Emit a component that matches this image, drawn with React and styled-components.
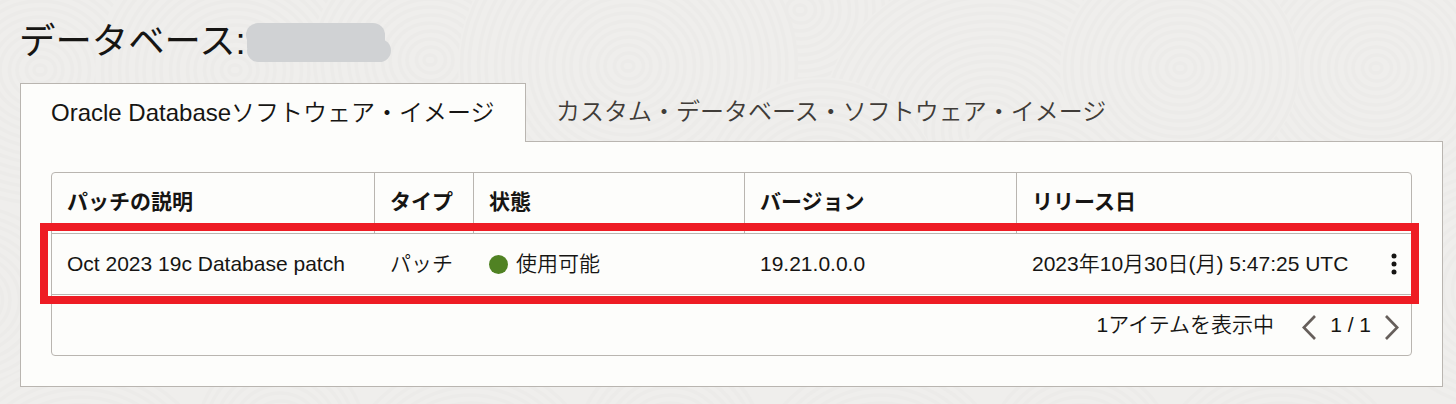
import React from "react";
import styled, { createGlobalStyle } from "styled-components";

const GlobalStyle = createGlobalStyle`
  *, *::before, *::after { box-sizing: border-box; }
  body {
    margin: 0;
    background: #efeeec;
    color: #161513;
    font-family: "Liberation Sans", "Noto Sans CJK JP", sans-serif;
    font-weight: 350;
  }
`;

const border = "#b9b5b0";

const Page = styled.main`
  position: relative;
  isolation: isolate;
  height: 404px;
  overflow: hidden;
  padding: 14px 13px 17px 20px;
`;

const Backdrop = styled.svg`
  position: absolute;
  inset: 0;
  z-index: -1;
`;

const TitleRow = styled.header`
  display: flex;
  height: 69px;
`;

const Title = styled.h1`
  margin: 0 0 0 -1px;
  font-size: 36.4px;
  font-weight: 400;
  line-height: 56px;
  white-space: nowrap;
`;

const Redaction = styled.svg`
  flex: none;
  margin-top: 9px;
`;

const Tabs = styled.nav`
  display: flex;
  height: 59px;
  position: relative;
  z-index: 1;
  margin-bottom: -1px;
`;

const Tab = styled.a`
  height: ${(p) => (p.$active ? 59 : 58)}px;
  padding: 0 30px;
  font-size: 24px;
  line-height: ${(p) => (p.$active ? 57 : 55)}px;
  white-space: nowrap;
  color: ${(p) => (p.$active ? "#161513" : "#403c38")};
  background: ${(p) => (p.$active ? "#fdfdfb" : "transparent")};
  border: solid ${(p) => (p.$active ? border : "transparent")};
  border-width: 1px 1px 0;
  ${(p) => (p.$active ? "width: 506px;" : "padding-left: 29px;")}
`;

const Panel = styled.section`
  height: 246px;
  padding: 30px;
  background: #fdfdfb;
  border: 1px solid ${border};
`;

const Table = styled.div`
  width: 1361px;
  height: 184px;
  border: 1px solid ${border};
  border-radius: 4px;
  font-size: 21px;
  line-height: 60px;
  white-space: nowrap;
`;

const Row = styled.div`
  position: relative;
  display: grid;
  grid-template-columns: 323px 99px 271px 272px 1fr;
  height: 61px;
  border-bottom: 1px solid ${border};
`;

const HeadCell = styled.div`
  padding-left: 15px;
  font-weight: 700;
  line-height: 58px;
  border-right: 1px solid ${border};
  &:last-child { border-right: 0; }
`;

const Cell = styled.div`
  display: flex;
  align-items: center;
  padding-left: 15px;
`;

const StatusDot = styled.span`
  width: 19px;
  height: 19px;
  margin: 1px 8px 0 0;
  border-radius: 50%;
  background: #508223;
`;

const MenuIcon = styled.svg`
  margin: 0 14px 0 auto;
`;

const Highlight = styled.div`
  position: absolute;
  top: -11px;
  left: -12px;
  width: 1379px;
  height: 81px;
  border: 8px solid #ee1c24;
  pointer-events: none;
  z-index: 1;
`;

const Pager = styled.footer`
  display: flex;
  align-items: center;
  justify-content: flex-end;
  height: 60px;
  padding-right: 12px;
`;

const PageNumber = styled.span`
  margin: 0 14px;
`;

const Arrow = styled.svg`
  margin-top: 4px;
  margin-left: ${(p) => p.$gap || 0}px;
`;

const centers = [
  [330, 10, 150], [800, 10, 140], [1100, 0, 150],
  [40, 70, 150], [235, 70, 140], [430, 60, 120],
  [628, 66, 170], [990, 130, 170], [820, 190, 120],
  [1376, 68, 140], [1180, 68, 120], [1040, 190, 90],
  [-30, 300, 110], [80, 490, 140], [280, 430, 90],
  [470, 480, 130], [670, 440, 100], [880, 480, 130],
  [1080, 450, 100], [1280, 480, 130], [1500, 290, 130],
];

function Rings() {
  return (
    <Backdrop width="1456" height="404" viewBox="0 0 1456 404" aria-hidden="true">
      {centers.map(([x, y, size], i) => (
        <g key={i}>
          <ellipse cx={x} cy={y} rx={size} ry={size * 0.94} fill="#efeeec" />
          {Array.from({ length: Math.floor(size / 8.5) }, (_, n) => (
            <ellipse key={n} cx={x + (n % 2)} cy={y} rx={n * 8.5 + 6} ry={n * 8 + 5}
              fill="none" stroke="#ecebe9" strokeWidth="3.5" />
          ))}
        </g>
      ))}
    </Backdrop>
  );
}

const headings = ["パッチの説明", "タイプ", "状態", "バージョン", "リリース日"];

export default function App() {
  return (
    <>
      <GlobalStyle />
      <Page>
        <Rings />
        <TitleRow>
          <Title>データベース:</Title>
          <Redaction width="145" height="39" viewBox="0 0 145 39">
            <rect width="139" height="24" rx="12" fill="#d0d2d4" />
            <rect x="1" y="16" width="144" height="23" rx="11.5" fill="#d0d2d4" />
            <rect x="1" y="11" width="138" height="14" fill="#d0d2d4" />
          </Redaction>
        </TitleRow>
        <Tabs>
          <Tab $active>Oracle Databaseソフトウェア・イメージ</Tab>
          <Tab>カスタム・データベース・ソフトウェア・イメージ</Tab>
        </Tabs>
        <Panel>
          <Table>
            <Row>
              {headings.map((h) => <HeadCell key={h}>{h}</HeadCell>)}
            </Row>
            <Row>
              <Cell>Oct 2023 19c Database patch</Cell>
              <Cell>パッチ</Cell>
              <Cell><StatusDot />使用可能</Cell>
              <Cell>19.21.0.0.0</Cell>
              <Cell>
                2023年10月30日(月) 5:47:25 UTC
                <MenuIcon width="6" height="22" viewBox="0 0 6 22" fill="#161513">
                  <circle cx="3" cy="3" r="2.5" />
                  <circle cx="3" cy="11" r="2.5" />
                  <circle cx="3" cy="19" r="2.5" />
                </MenuIcon>
              </Cell>
              <Highlight />
            </Row>
            <Pager>
              <span>1アイテムを表示中</span>
              <Arrow $gap={28} width="14" height="25" viewBox="0 0 14 25" fill="none" stroke="#665f5b" strokeWidth="2.7">
                <path d="M13 1 1.8 12.5 13 24" />
              </Arrow>
              <PageNumber>1 / 1</PageNumber>
              <Arrow width="14" height="25" viewBox="0 0 14 25" fill="none" stroke="#665f5b" strokeWidth="2.7">
                <path d="M1 1 12.2 12.5 1 24" />
              </Arrow>
            </Pager>
          </Table>
        </Panel>
      </Page>
    </>
  );
}
